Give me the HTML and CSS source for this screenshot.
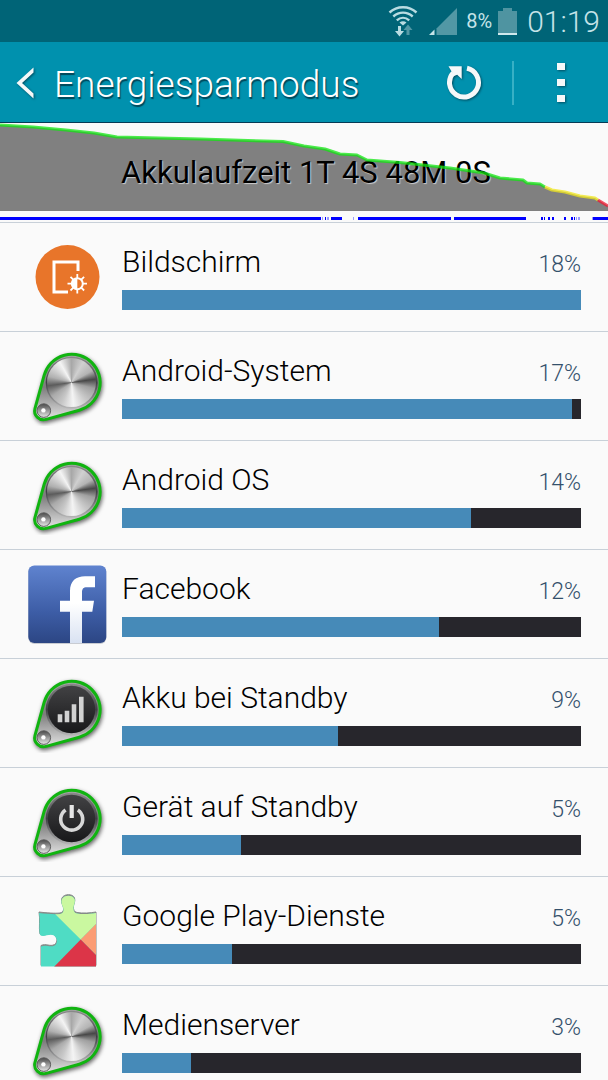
FILE: index.html
```html
<!DOCTYPE html>
<html lang="de">
<head>
    <meta charset="UTF-8">
    <meta name="viewport" content="width=device-width, initial-scale=1.0">
    <title>Energiesparmodus</title>
    <link rel="stylesheet" href="styles.css">
</head>
<body>
    <!-- shared icon parts -->
    <svg class="defs" width="0" height="0" aria-hidden="true">
        <defs>
            <linearGradient id="body" x1="0" y1="0" x2="0" y2="1">
                <stop offset="0" stop-color="#a5a5a5"/>
                <stop offset="0.5" stop-color="#7c7c7c"/>
                <stop offset="1" stop-color="#e4e4e4"/>
            </linearGradient>
            <linearGradient id="metal" x1="0" y1="0" x2="0" y2="1">
                <stop offset="0" stop-color="#8a8a8a"/>
                <stop offset="0.5" stop-color="#3f4044"/>
                <stop offset="1" stop-color="#b8b8b8"/>
            </linearGradient>
            <linearGradient id="dark-face" x1="0" y1="0" x2="0" y2="1">
                <stop offset="0" stop-color="#424244"/>
                <stop offset="1" stop-color="#18181a"/>
            </linearGradient>
            <linearGradient id="knob" x1="0" y1="0" x2="0" y2="1">
                <stop offset="0" stop-color="#4a4a4a"/>
                <stop offset="0.5" stop-color="#9a9a9a"/>
                <stop offset="1" stop-color="#e8e8e8"/>
            </linearGradient>
            <linearGradient id="fb-blue" x1="0" y1="0" x2="0" y2="1">
                <stop offset="0" stop-color="#5f83cf"/>
                <stop offset="0.6" stop-color="#3d5da6"/>
                <stop offset="1" stop-color="#2c4684"/>
            </linearGradient>
            <linearGradient id="fb-white" x1="0" y1="0" x2="0" y2="1">
                <stop offset="0.4" stop-color="#ffffff"/>
                <stop offset="1" stop-color="#d9e2f2"/>
            </linearGradient>
            <g id="dial">
                <path class="dial-body" d="M17.2 29.1A28.5 28.5 0 1 1 52.3 64.2L19.1 73.4A9 9 0 0 1 8 62.3Z" fill="url(#body)"/>
                <circle cx="44.7" cy="36.7" r="26" fill="url(#metal)"/>
                <circle cx="16.8" cy="64.6" r="6.8" fill="url(#knob)" stroke="#5c5c5c" stroke-width="1"/>
                <circle cx="16.4" cy="64.4" r="2.2" fill="#fff"/>
            </g>
        </defs>
    </svg>

    <div class="status-bar">
        <svg class="wifi" width="30" height="32" viewBox="0 0 30 32" fill="none">
            <g stroke="#b9dce2" stroke-width="2.4">
                <path d="M1.5 7.5C9 0.5 21 0.5 28.5 7.5"/>
                <path d="M5.3 11.5C11 6.3 19 6.3 24.7 11.5"/>
                <path d="M8.8 15.3C12.5 12 17.5 12 21.2 15.3"/>
            </g>
            <path d="M11.5 17.5C13.5 15.9 16.5 15.9 18.5 17.5L15 20.5Z" fill="#b9dce2"/>
            <path d="M10 21h3v5h3L11.5 31.5L7 26h3Z" fill="#b9dce2"/>
            <path d="M18.5 30h3v-5h3L20 19.5L15.5 25h3Z" fill="#5298a5"/>
        </svg>
        <svg class="signal" width="28" height="28" viewBox="0 0 28 28">
            <path d="M28 1V28H7.5V21.5Z" fill="#5298a5"/>
            <path d="M5.5 22.5V28H0Z" fill="#c5e3e8"/>
        </svg>
        <span class="battery-level">8%</span>
        <svg class="battery" width="19" height="27" viewBox="0 0 19 27">
            <path d="M5 0h9v3h5v22H0V3h5Z" fill="#4f94a1"/>
            <path d="M0 25h19v2H0Z" fill="#cfe8ec"/>
        </svg>
        <time class="clock">01:19</time>
    </div>

    <header class="action-bar">
        <button class="back" type="button" aria-label="Zurück">
            <svg width="18" height="32" viewBox="0 0 18 32">
                <path d="M17.5 0.5V5.5L6 16L17.5 26.5V31.5L0.5 16Z" fill="#f5f8f9"/>
            </svg>
        </button>
        <h1>Energiesparmodus</h1>
        <button class="refresh" type="button" aria-label="Aktualisieren">
            <svg width="36" height="36" viewBox="0 0 36 36">
                <path d="M21 3.3A14.5 14.5 0 1 1 7.2 7.8" fill="none" stroke="#f5f8f9" stroke-width="5"/>
                <path d="M2.5 1.3H15.7V14L11.2 9.8L8 11L5 5.5Z" fill="#f5f8f9"/>
            </svg>
        </button>
        <button class="menu" type="button" aria-label="Menü">
            <svg width="8" height="40" viewBox="0 0 8 40" fill="#f5f8f9">
                <path d="M0 0h8v7H0ZM0 16h8v7H0ZM0 32h8v7H0Z"/>
            </svg>
        </button>
    </header>

    <main>
        <section class="history">
            <svg viewBox="0 0 608 99" preserveAspectRatio="none" aria-hidden="true">
                <path d="M0 2L33 4L66 7L94 10L117 14L200 16L283 18.5L304 23L325 26L340 31L357 32L367 37L400 39.5L450 45L484 50L500 55L523 57L527 60L540 61L545 64L552 67L565 69L580 73L595 75L608 83V88H0Z" fill="#808080"/>
                <!-- screen-on phases -->
                <path d="M0 94h321v3H0ZM325 94h1v3h-1ZM331 94h11v3h-11ZM358 94h93v3h-93ZM454 94h72v3h-72ZM541 94h2v3h-2ZM544 94h1v3h-1ZM548 94h2v3h-2ZM552 94h2v3h-2ZM564 94h2v3h-2ZM571 94h2v3h-2ZM574 94h1v3h-1ZM593 94h15v3h-15Z" fill="#0000ff"/>
                <path d="M322 94h1v3h-1ZM327 94h2v3h-2ZM353 94h1v3h-1ZM576 94h1v3h-1ZM578 94h2v3h-2ZM592 94h1v3h-1Z" fill="#9a9aff"/>
            </svg>
            <p class="runtime">Akkulaufzeit 1T 4S 48M 0S</p>
            <!-- the curve runs over the text -->
            <svg class="curve" viewBox="0 0 608 99" preserveAspectRatio="none" aria-hidden="true">
                <path d="M0 2L33 4L66 7L94 10L117 14L200 16L283 18.5L304 23L325 26L340 31L357 32L367 37L400 39.5L450 45L484 50L500 55L523 57L527 60L540 61L545 64" stroke="#12e612"/>
                <path d="M545 64L552 67L565 69L580 73L595 75L598 77" stroke="#f0e61e"/>
                <path d="M598 77L608 83" stroke="#f01830"/>
            </svg>
        </section>

        <ul class="usage-list">
            <li>
                <svg class="icon" viewBox="0 0 80 80">
                    <circle cx="40.5" cy="40" r="32" fill="#e8752a"/>
                    <path d="M51 34V25H27V55H41" fill="none" stroke="#fff" stroke-width="3"/>
                    <circle cx="50.3" cy="46.7" r="5.5" fill="none" stroke="#fff" stroke-width="2"/>
                    <path d="M50.3 41.2a5.5 5.5 0 0 0 0 11Z" fill="#fff"/>
                    <path d="M50.3 37v4M50.3 52.5v4M40.5 46.7h4M56 46.7h4M43.5 39.9l2.8 2.8M54.3 50.7l2.8 2.8M43.5 53.5l2.8-2.8M54.3 42.7l2.8-2.8" stroke="#fff" stroke-width="1.8"/>
                </svg>
                <div class="usage">
                    <div class="label"><span class="name">Bildschirm</span><span class="percent">18%</span></div>
                    <div class="bar"><div class="fill" style="width: 100%"></div></div>
                </div>
            </li>
            <li>
                <svg class="icon" viewBox="0 0 80 80">
                    <use href="#dial"/>
                    <foreignObject x="20" y="12" width="49" height="49"><div class="steel"></div></foreignObject>
                </svg>
                <div class="usage">
                    <div class="label"><span class="name">Android-System</span><span class="percent">17%</span></div>
                    <div class="bar"><div class="fill" style="width: 98%"></div></div>
                </div>
            </li>
            <li>
                <svg class="icon" viewBox="0 0 80 80">
                    <use href="#dial"/>
                    <foreignObject x="20" y="12" width="49" height="49"><div class="steel"></div></foreignObject>
                </svg>
                <div class="usage">
                    <div class="label"><span class="name">Android OS</span><span class="percent">14%</span></div>
                    <div class="bar"><div class="fill" style="width: 76%"></div></div>
                </div>
            </li>
            <li>
                <svg class="icon" viewBox="0 0 80 80">
                    <rect x="1.3" y="2" width="78" height="78" rx="6" fill="#c9ccd2"/>
                    <rect x="1.3" y="1.5" width="78" height="77.5" rx="6" fill="url(#fb-blue)"/>
                    <path d="M43 36.7V27C43 17 49 12.3 58 12.3H68V23.3H60C56 23.3 55 25 55 29V36.7H67L65.3 47.7H55V79H43V47.7H33V36.7Z" fill="url(#fb-white)"/>
                </svg>
                <div class="usage">
                    <div class="label"><span class="name">Facebook</span><span class="percent">12%</span></div>
                    <div class="bar"><div class="fill" style="width: 69%"></div></div>
                </div>
            </li>
            <li>
                <svg class="icon" viewBox="0 0 80 80">
                    <use href="#dial"/>
                    <circle cx="44.5" cy="36.5" r="23.7" fill="url(#dark-face)"/>
                    <path d="M30.7 41.3h4.6v8h-4.6ZM37.7 37.7h4.6v11.600h-4.600ZM44.7 31.3h4.6v18h-4.6ZM52 23.7h4.6v25.6H52Z" fill="#d2d2d2"/>
                </svg>
                <div class="usage">
                    <div class="label"><span class="name">Akku bei Standby</span><span class="percent">9%</span></div>
                    <div class="bar"><div class="fill" style="width: 47%"></div></div>
                </div>
            </li>
            <li>
                <svg class="icon" viewBox="0 0 80 80">
                    <use href="#dial"/>
                    <circle cx="44.5" cy="36.5" r="23.7" fill="url(#dark-face)"/>
                    <path d="M38.6 28A11 11 0 1 0 50.8 28" fill="none" stroke="#d8d8d8" stroke-width="3.6"/>
                    <path d="M44.7 23V36" stroke="#e6e6e6" stroke-width="4.2"/>
                </svg>
                <div class="usage">
                    <div class="label"><span class="name">Gerät auf Standby</span><span class="percent">5%</span></div>
                    <div class="bar"><div class="fill" style="width: 26%"></div></div>
                </div>
            </li>
            <li>
                <svg class="icon" viewBox="0 0 80 80">
                    <clipPath id="puzzle">
                        <path id="piece" d="M12 22C20 23 28 23.5 33 23C37 22 37 19 36 16C34.5 13 34 10 35 8C37 3.5 46 3.5 47.500 8C48.500 11 47 13 46.500 16C46 20 47.500 22 50 22.500C56 23.500 63 23 69 22V75.500H14V55.500C19 53 23 57 27.500 54.500C31 52 30.500 47 27 44.500C22 42 17 47 13 44C11.500 37 13.500 30 12 22Z"/>
                    </clipPath>
                    <use href="#piece" y="-1" fill="#858a88" stroke="#858a88"/>
                    <g clip-path="url(#puzzle)">
                        <path d="M10 0H80V80H10Z" fill="#4fdcc4"/>
                        <path d="M5 0H80V22L53.700 48.500Z" fill="#caf8a0"/>
                        <path d="M53.700 48.500L80 22V75Z" fill="#fb9c74"/>
                        <path d="M53.700 48.500L80 75V80H23Z" fill="#dc3548"/>
                    </g>
                </svg>
                <div class="usage">
                    <div class="label"><span class="name">Google Play-Dienste</span><span class="percent">5%</span></div>
                    <div class="bar"><div class="fill" style="width: 24%"></div></div>
                </div>
            </li>
            <li>
                <svg class="icon" viewBox="0 0 80 80">
                    <use href="#dial"/>
                    <foreignObject x="20" y="12" width="49" height="49"><div class="steel"></div></foreignObject>
                </svg>
                <div class="usage">
                    <div class="label"><span class="name">Medienserver</span><span class="percent">3%</span></div>
                    <div class="bar"><div class="fill" style="width: 15%"></div></div>
                </div>
            </li>
        </ul>
    </main>
</body>
</html>
```
FILE: styles.css
```css
* {
    box-sizing: border-box;
    margin: 0;
    padding: 0;
}
body {
    font-family: Roboto, "Liberation Sans", sans-serif;
    font-weight: 300;
    background-color: #fafafa;
    color: #000;
    display: flex;
    flex-direction: column;
    height: 100vh;
}
svg {
    display: block;
    flex: none;
}
.defs {
    position: absolute;
}
.status-bar {
    flex: none;
    height: 42px;
    padding-right: 8px;
    display: flex;
    justify-content: flex-end;
    align-items: center;
    background-color: #006477;
    color: #c5e3e8;
}
.signal {
    margin-left: 11px;
}
.battery-level {
    margin-left: 9px;
    font-size: 20px;
    font-weight: 400;
}
.battery {
    margin: 0 10px 0 6px;
}
.clock {
    font-size: 30px;
}
.action-bar {
    flex: none;
    height: 81px;
    padding: 2px 0 0 16px;
    display: flex;
    align-items: center;
    background-color: #0091ae;
    border-bottom: 1px solid #063a55;
}
.action-bar button {
    height: 44px;
    display: flex;
    align-items: center;
    justify-content: center;
    background: none;
    border: none;
    cursor: pointer;
}
.action-bar svg {
    filter: drop-shadow(1px 1px 1px rgba(0, 50, 65, 0.7));
}
h1 {
    flex: 1;
    margin-left: 20px;
    padding-top: 2px;
    font-size: 37px;
    font-weight: 300;
    color: #fff;
    text-shadow: 1px 2px 1px rgba(0, 50, 65, 0.8);
}
.refresh,
.menu {
    width: 96px;
}
.action-bar .menu {
    border-left: 2px solid #37b0c5;
}
main {
    flex: 1;
    min-height: 0;
    overflow-y: auto;
    scrollbar-width: none;
}
.history {
    position: relative;
    border-bottom: 1px solid #c8d0d8;
}
.history svg {
    width: 100%;
    height: 99px;
}
.runtime {
    position: absolute;
    left: 121px;
    top: 32px;
    font-size: 31px;
    line-height: 36px;
    font-weight: 400;
    text-shadow: 1px 1px 1px rgba(255, 255, 255, 0.6);
}
.history .curve {
    position: absolute;
    top: 0;
    left: 0;
    fill: none;
    stroke-width: 3px;
    stroke-linejoin: round;
    opacity: 0.75;
}
.usage-list {
    list-style: none;
}
.usage-list li {
    height: 109px;
    padding: 0 27px;
    display: flex;
    align-items: center;
    gap: 15px;
    border-bottom: 1px solid #c8d0d8;
}
.icon {
    width: 80px;
    height: 80px;
}
.dial-body {
    stroke: #10b410;
    stroke-width: 3px;
    filter: drop-shadow(1px 2px 2px rgba(0, 0, 0, 0.6));
}
.steel {
    height: 100%;
    border-radius: 50%;
    background: conic-gradient(#a8a8a8, #d0d0d0 30deg, #b4b4b4 60deg, #484848 82deg, #a0a0a0 105deg, #c8c8c8 140deg, #f4f4f4 175deg, #c8c8c8 205deg, #aaa 235deg, #5c5c5c 262deg, #b0b0b0 285deg, #f4f4f4 330deg, #a8a8a8);
}
.usage {
    flex: 1;
    padding-bottom: 3px;
}
.label {
    display: flex;
    justify-content: space-between;
    align-items: baseline;
    line-height: 40px;
    margin-bottom: 5px;
}
.name {
    font-size: 30px;
}
.percent {
    font-size: 23px;
    color: #34506b;
}
.bar {
    height: 20px;
    background-color: #27262c;
}
.fill {
    height: 100%;
    background-color: #468ab8;
}
```
